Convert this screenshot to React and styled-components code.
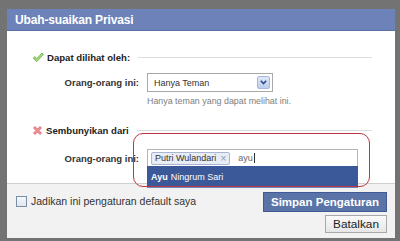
import React from 'react';
import styled, { createGlobalStyle } from 'styled-components';

const GlobalStyle = createGlobalStyle`
  html, body {
    margin: 0;
    padding: 0;
    background: #727272;
  }
  * { box-sizing: border-box; }
`;

const CheckIcon = () => (
    <svg width="12" height="11" viewBox="0 0 12 11">
        <path d="M1 6.2 L3 4.6 L4.8 6.6 L10 1 L11.4 2.4 L4.8 9.6 Z" fill="#a4d77c" stroke="#6fae4c" strokeWidth="0.8" strokeLinejoin="round" />
    </svg>
);

const CrossIcon = () => (
    <svg width="11" height="11" viewBox="0 0 11 11">
        <path d="M1.5 3 L3 1.5 L5.5 4 L8 1.5 L9.5 3 L7 5.5 L9.5 8 L8 9.5 L5.5 7 L3 9.5 L1.5 8 L4 5.5 Z" fill="#ef8e98" stroke="#d35d6a" strokeWidth="0.7" strokeLinejoin="round" />
    </svg>
);

const ChevronIcon = () => (
    <svg width="7" height="5" viewBox="0 0 7 5">
        <path d="M0.8 0.8 L3.5 3.6 L6.2 0.8" fill="none" stroke="#2b4a8a" strokeWidth="1.6" />
    </svg>
);

export default () => (
    <Page>
        <GlobalStyle />

        <Dialog>

            <TitleBar>Ubah-suaikan Privasi</TitleBar>

            <Body>

                <SectionHeader>
                    <CheckIcon />
                    <SectionTitle>Dapat dilihat oleh:</SectionTitle>
                    <Rule />
                </SectionHeader>

                <FieldRow>
                    <FieldLabel>Orang-orang ini:</FieldLabel>
                    <Select>
                        <span>Hanya Teman</span>
                        <SelectArrow><ChevronIcon /></SelectArrow>
                    </Select>
                    <Hint>Hanya teman yang dapat melihat ini.</Hint>
                </FieldRow>

                <SectionHeader $gap={15}>
                    <CrossIcon />
                    <SectionTitle>Sembunyikan dari</SectionTitle>
                    <Rule />
                </SectionHeader>

                <FieldRow $gap={12}>
                    <FieldLabel>Orang-orang ini:</FieldLabel>
                    <TokenInput>
                        <Token>
                            Putri Wulandari
                            <TokenRemove>×</TokenRemove>
                        </Token>
                        <Typed>ayu</Typed>
                        <Caret />
                        <Suggestions>
                            <Suggestion><b>Ayu</b> Ningrum Sari</Suggestion>
                        </Suggestions>
                    </TokenInput>
                </FieldRow>

            </Body>

            <Footer>
                <DefaultOption>
                    <Checkbox />
                    Jadikan ini pengaturan default saya
                </DefaultOption>
                <Buttons>
                    <SaveButton>Simpan Pengaturan</SaveButton>
                    <CancelButton>Batalkan</CancelButton>
                </Buttons>
            </Footer>

        </Dialog>

        <Highlight />
    </Page>
);

const Page = styled.div`
position: relative;
width: 400px;
height: 241px;
padding: 9px 5px 3px 7px;
background: #737373;
font-family: "Liberation Sans", Arial, sans-serif;
overflow: hidden;
`
const Dialog = styled.div`
display: flex;
flex-direction: column;
width: 388px;
height: 229px;
background: #fff;
`
const TitleBar = styled.div`
height: 22px;
padding-left: 8px;
display: flex;
align-items: center;
background: #6d82b8;
border-bottom: 1px solid #5a6fa6;
color: #fff;
font-size: 12px;
font-weight: bold;
letter-spacing: -0.15px;
`
const Body = styled.div`
flex: 1;
padding: 19px 23px 0 25px;
`
const SectionHeader = styled.div`
display: flex;
align-items: center;
height: 14px;
margin-top: ${p => p.$gap || 0}px;
svg { flex: none; }
`
const SectionTitle = styled.div`
margin-left: 3px;
font-size: 9.6px;
font-weight: bold;
color: #222;
white-space: nowrap;
`
const Rule = styled.div`
flex: 1;
height: 1px;
margin-left: 8px;
background: #dcdcdc;
`
const FieldRow = styled.div`
display: grid;
grid-template-columns: 107px auto;
column-gap: 8px;
justify-content: start;
margin-top: ${p => p.$gap || 9}px;
`
const FieldLabel = styled.div`
align-self: center;
text-align: right;
font-size: 9.5px;
font-weight: bold;
color: #333;
`
const Select = styled.div`
width: 126px;
height: 19px;
display: flex;
align-items: center;
justify-content: space-between;
padding: 0 2px 0 6px;
border: 1px solid #a9a9a9;
background: #fff;
font-size: 9px;
color: #333;
`
const SelectArrow = styled.div`
width: 13px;
height: 13px;
display: flex;
align-items: center;
justify-content: center;
background: linear-gradient(#dfe8f8, #bccdee);
border: 1px solid #a7b8dc;
border-radius: 2px;
`
const Hint = styled.div`
grid-column: 2;
margin-top: 3px;
line-height: 13px;
font-size: 8.9px;
color: #808080;
`
const TokenInput = styled.div`
position: relative;
width: 211px;
height: 18px;
display: flex;
align-items: center;
padding-left: 3px;
border: 1px solid #b4b4b4;
background: #fff;
font-size: 9px;
`
const Token = styled.div`
display: flex;
align-items: center;
height: 13px;
padding: 0 3px 0 3px;
background: #e8ecf5;
border: 1px solid #a9b6d2;
border-radius: 2px;
color: #333;
`
const TokenRemove = styled.span`
margin-left: 4px;
color: #8a9ab8;
font-size: 10px;
`
const Typed = styled.span`
margin-left: 8px;
color: #666;
`
const Caret = styled.span`
width: 1px;
height: 10px;
margin-left: 1px;
background: #333;
`
const Suggestions = styled.div`
position: absolute;
top: 100%;
left: -1px;
width: 211px;
z-index: 2;
background: #3b5998;
border-bottom: 1px solid #6d84b4;
`
const Suggestion = styled.div`
height: 21px;
display: flex;
align-items: center;
padding-left: 4px;
color: #fff;
font-size: 9px;
b { margin-right: 3px; }
`
const Footer = styled.div`
height: 55px;
display: flex;
justify-content: space-between;
align-items: flex-start;
padding: 8px 8px 0 9px;
background: #f2f2f2;
border-top: 1px solid #cfcfcf;
`
const DefaultOption = styled.label`
display: flex;
align-items: center;
margin-top: 3px;
font-size: 10.5px;
color: #333;
`
const Checkbox = styled.span`
width: 11px;
height: 11px;
margin-right: 4px;
border: 1px solid #7a8ea8;
background: linear-gradient(#f4f6f9, #e1e6ee);
`
const Buttons = styled.div`
display: flex;
flex-direction: column;
align-items: flex-end;
gap: 3px;
`
const SaveButton = styled.div`
width: 124px;
height: 20px;
display: flex;
align-items: center;
justify-content: center;
background: #5b74a8;
border: 1px solid #3f5a94;
color: #fff;
font-size: 11.5px;
font-weight: bold;
`
const CancelButton = styled.div`
width: 62px;
height: 18px;
display: flex;
align-items: center;
justify-content: center;
background: linear-gradient(#fafafa, #e6e6e6);
border: 1px solid #a8a8a8;
color: #222;
font-size: 11.8px;
`
const Highlight = styled.div`
position: absolute;
left: 133px;
top: 133px;
width: 237px;
height: 54px;
border: 1px solid #bd3646;
border-radius: 10px;
z-index: 3;
pointer-events: none;
`
